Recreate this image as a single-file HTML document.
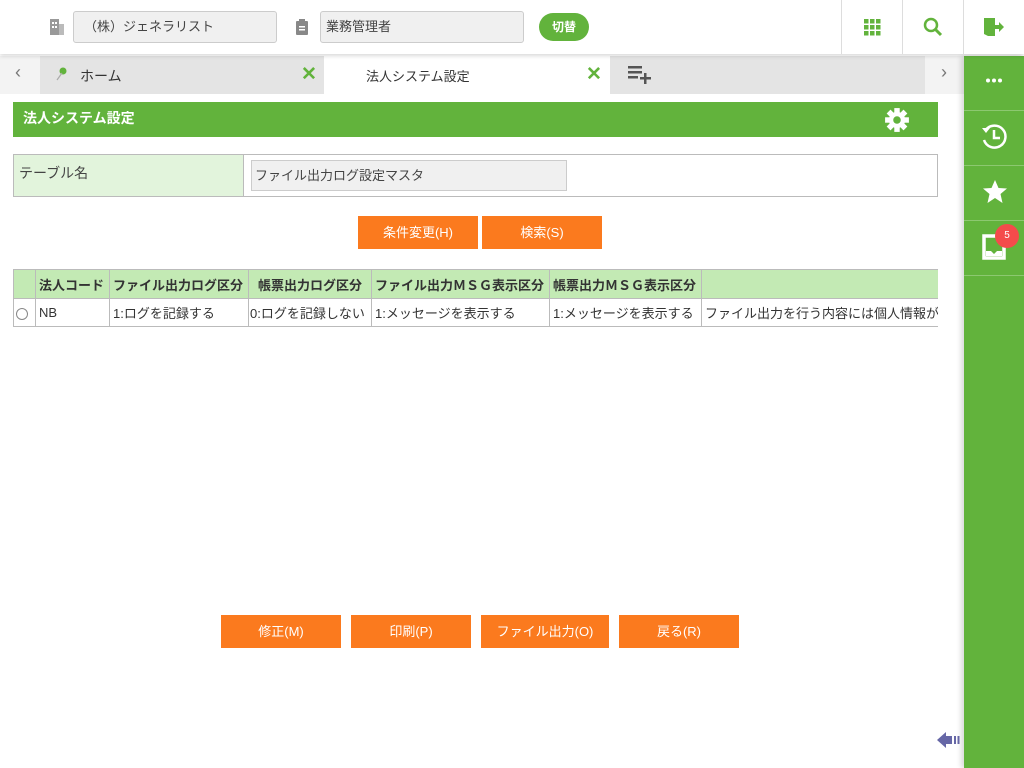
<!DOCTYPE html>
<html><head><meta charset="utf-8"><style>
*{box-sizing:border-box;margin:0;padding:0}
body{width:1024px;height:768px;position:relative;overflow:hidden;background:#fff;font-family:"Liberation Sans","Noto Sans CJK JP",sans-serif;font-size:13px;color:#333}
.a{position:absolute}
.inp{position:absolute;background:#f0f0f0;border:1px solid #ccc;border-radius:3px;font-size:13px;padding-left:10px;line-height:30px;color:#444}
.btn{position:absolute;background:#fb7a1e;color:#fff;text-align:center;font-size:13px;line-height:33px;height:33px}
.tw{position:absolute;left:13px;top:269px;width:925px;overflow:hidden}
table{border-collapse:collapse;table-layout:fixed}
td,th{border:1px solid #bbb;white-space:nowrap;overflow:hidden;padding:0 3px;font-size:13px;text-align:left}
th{background:#c3eab4;height:29px;font-weight:bold;color:#333}
td{height:28px}
</style></head><body>
<div class="a" style="left:0;top:0;width:1024px;height:54px;background:#fff;box-shadow:0 2px 4px rgba(0,0,0,.15);z-index:2">
<svg class="a" style="left:50px;top:19px" width="14" height="16"><rect x="0" y="0" width="9" height="16" fill="#999"/><rect x="9" y="5" width="5" height="11" fill="#bbb"/><rect x="2" y="3" width="2" height="2" fill="#fff"/><rect x="5" y="3" width="2" height="2" fill="#fff"/><rect x="2" y="7" width="2" height="2" fill="#fff"/><rect x="5" y="7" width="2" height="2" fill="#fff"/></svg>
<div class="inp" style="left:73px;top:11px;width:204px;height:32px">（株）ジェネラリスト</div>
<svg class="a" style="left:296px;top:19px" width="12" height="16"><rect x="0" y="2" width="12" height="14" rx="1" fill="#888"/><rect x="3" y="0" width="6" height="4" fill="#888"/><rect x="3" y="7" width="6" height="1.5" fill="#fff"/><rect x="3" y="10" width="6" height="1.5" fill="#fff"/></svg>
<div class="inp" style="left:320px;top:11px;width:204px;height:32px;padding-left:5px">業務管理者</div>
<div class="a" style="left:539px;top:13px;width:50px;height:28px;border-radius:14px;background:#62b33c;color:#fff;text-align:center;line-height:28px;font-weight:bold;font-size:12px">切替</div>
<div class="a" style="left:841px;top:0;width:1px;height:54px;background:#ddd"></div>
<div class="a" style="left:902px;top:0;width:1px;height:54px;background:#ddd"></div>
<div class="a" style="left:963px;top:0;width:1px;height:54px;background:#ddd"></div>
<svg class="a" style="left:864px;top:19px" width="17" height="17" fill="#62b33c"><rect x="0" y="0" width="4.5" height="4.5"/><rect x="6" y="0" width="4.5" height="4.5"/><rect x="12" y="0" width="4.5" height="4.5"/><rect x="0" y="6" width="4.5" height="4.5"/><rect x="6" y="6" width="4.5" height="4.5"/><rect x="12" y="6" width="4.5" height="4.5"/><rect x="0" y="12" width="4.5" height="4.5"/><rect x="6" y="12" width="4.5" height="4.5"/><rect x="12" y="12" width="4.5" height="4.5"/></svg>
<svg class="a" style="left:923px;top:17px" width="20" height="20"><circle cx="8" cy="8" r="6" fill="none" stroke="#62b33c" stroke-width="2.5"/><path d="M12 12 L18 18" stroke="#62b33c" stroke-width="3"/></svg>
<svg class="a" style="left:983px;top:16px" width="22" height="22" fill="#62b33c"><path d="M1 2 H12 V8 H9 V5 H5 V20 L1 18 Z"/><path d="M5 4 L12 2 V20 L5 20 Z"/><path d="M12 9 H16 V6 L21 11 L16 16 V13 H12 Z"/></svg>
</div>
<div class="a" style="left:0;top:56px;width:964px;height:38px;background:#f3f3f3"></div>
<div class="a" style="left:15px;top:62px;color:#777;font-size:18px">&lsaquo;</div>
<div class="a" style="left:40px;top:56px;width:284px;height:38px;background:#e4e4e4"></div>
<div class="a" style="left:324px;top:56px;width:286px;height:38px;background:#fff"></div>
<svg class="a" style="left:55px;top:67px" width="12" height="14"><circle cx="8" cy="4" r="3.5" fill="#62b33c"/><path d="M7 6 L2 13" stroke="#aaa" stroke-width="1.2"/></svg>
<div class="a" style="left:80px;top:66px;font-size:14px">ホーム</div>
<div class="a" style="left:301px;top:63px;color:#62b33c;font-size:19px;font-weight:bold">✕</div>
<div class="a" style="left:366px;top:66px;font-size:13px">法人システム設定</div>
<div class="a" style="left:586px;top:63px;color:#62b33c;font-size:19px;font-weight:bold">✕</div>
<div class="a" style="left:610px;top:56px;width:315px;height:38px;background:#e4e4e4"></div>
<svg class="a" style="left:628px;top:66px" width="26" height="18" fill="#555"><rect x="0" y="0" width="14" height="2.5"/><rect x="0" y="5" width="14" height="2.5"/><rect x="0" y="10" width="10" height="2.5"/><rect x="16" y="7" width="2.5" height="11"/><rect x="12" y="11" width="11" height="2.5"/></svg>
<div class="a" style="left:941px;top:62px;color:#777;font-size:18px">&rsaquo;</div>
<div class="a" style="left:964px;top:56px;width:60px;height:712px;background:#62b33c;box-shadow:-3px 0 5px rgba(0,0,0,.15)"></div>
<div class="a" style="left:964px;top:110px;width:60px;height:1px;background:#8cc870"></div>
<div class="a" style="left:964px;top:165px;width:60px;height:1px;background:#8cc870"></div>
<div class="a" style="left:964px;top:220px;width:60px;height:1px;background:#8cc870"></div>
<div class="a" style="left:964px;top:275px;width:60px;height:1px;background:#8cc870"></div>
<svg class="a" style="left:986px;top:78px" width="16" height="5" fill="#fff"><circle cx="2" cy="2.5" r="2"/><circle cx="8" cy="2.5" r="2"/><circle cx="14" cy="2.5" r="2"/></svg>
<svg class="a" style="left:980px;top:122px" width="30" height="30" fill="none" stroke="#fff" stroke-width="2.5"><path d="M5 9 A11 11 0 1 1 4 18"/><path d="M2 6 L6 11 L10 6" fill="#fff" stroke="none"/><path d="M14 8 V16 H20"/></svg>
<svg class="a" style="left:982px;top:179px" width="26" height="26" fill="#fff"><path d="M13 1 L16.5 9 L25 9.5 L18.5 15 L20.5 24 L13 19 L5.5 24 L7.5 15 L1 9.5 L9.5 9 Z"/></svg>
<svg class="a" style="left:982px;top:234px" width="28" height="26"><path d="M2 2 H22 V24 H2 Z" fill="none" stroke="#fff" stroke-width="3.5"/><path d="M4 17 H9 L12 20 L15 17 H20 V22 H4 Z" fill="#fff"/></svg>
<div class="a" style="left:995px;top:224px;width:24px;height:24px;border-radius:12px;background:#f44b4b;color:#fff;font-size:10px;text-align:center;line-height:24px">5</div>
<svg class="a" style="left:937px;top:731px" width="26" height="18"><path d="M0 9 L9 1 V5 H15 V13 H9 V17 Z" fill="#6667a6"/><rect x="17" y="5" width="2" height="8" fill="#6667a6"/><rect x="20.5" y="5" width="2" height="8" fill="#6667a6"/></svg>
<div class="a" style="left:13px;top:102px;width:925px;height:35px;background:#62b33c;color:#fff;font-weight:bold;font-size:14px;line-height:33px;padding-left:10px">法人システム設定</div>
<svg class="a" style="left:884px;top:107px" width="26" height="26" viewBox="0 0 24 24"><g fill="#fff"><circle cx="12" cy="12" r="7.5"/><rect x="9.5" y="1" width="5" height="22"/><rect x="1" y="9.5" width="22" height="5"/><rect x="9.5" y="1" width="5" height="22" transform="rotate(45 12 12)"/><rect x="9.5" y="1" width="5" height="22" transform="rotate(-45 12 12)"/></g><circle cx="12" cy="12" r="3.5" fill="#62b33c"/></svg>
<div class="a" style="left:13px;top:154px;width:925px;height:43px;border:1px solid #bbb"></div>
<div class="a" style="left:14px;top:155px;width:230px;height:41px;background:#e2f4dc;border-right:1px solid #bbb;padding-left:5px;line-height:36px;font-size:14px;color:#444">テーブル名</div>
<div class="inp" style="left:251px;top:160px;width:316px;height:31px;border-radius:0;padding-left:3px">ファイル出力ログ設定マスタ</div>
<div class="btn" style="left:358px;top:216px;width:120px">条件変更(H)</div>
<div class="btn" style="left:482px;top:216px;width:120px">検索(S)</div>
<div class="tw">
<table style="width:926px">
<colgroup><col style="width:22px"><col style="width:74px"><col style="width:139px"><col style="width:123px"><col style="width:178px"><col style="width:152px"><col style="width:238px"></colgroup>
<tr><th></th><th>法人コード</th><th>ファイル出力ログ区分</th><th style="text-align:center">帳票出力ログ区分</th><th>ファイル出力ＭＳＧ表示区分</th><th>帳票出力ＭＳＧ表示区分</th><th></th></tr>
<tr><td style="padding:0 2px"><span style="display:inline-block;width:12px;height:12px;border:1px solid #888;border-radius:50%;vertical-align:middle"></span></td><td>NB</td><td>1:ログを記録する</td><td style="padding:0 1px">0:ログを記録しない</td><td>1:メッセージを表示する</td><td>1:メッセージを表示する</td><td>ファイル出力を行う内容には個人情報が</td></tr>
</table>
</div>
<div class="btn" style="left:221px;top:615px;width:120px">修正(M)</div>
<div class="btn" style="left:351px;top:615px;width:120px">印刷(P)</div>
<div class="btn" style="left:481px;top:615px;width:128px">ファイル出力(O)</div>
<div class="btn" style="left:619px;top:615px;width:120px">戻る(R)</div>
</body></html>
